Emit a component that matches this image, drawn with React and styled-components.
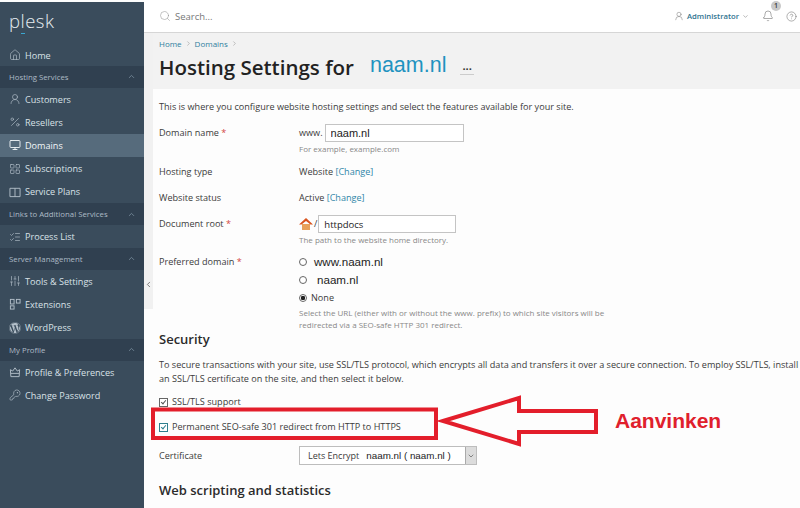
import styled, { createGlobalStyle } from "styled-components";
import {
  Bell,
  ChevronDown,
  ChevronLeft,
  ChevronRight,
  ChevronUp,
  CircleHelp,
  House,
  KeyRound,
  LayoutGrid,
  ListChecks,
  Monitor,
  Percent,
  Search,
  SlidersVertical,
  UserRound,
} from "lucide-react";
import { FaWordpress } from "react-icons/fa";

const GlobalStyle = createGlobalStyle`
  html, body {
    margin: 0;
    padding: 0;
    background: #fdfdfd;
  }
  body {
    font-family: "Open Sans", "Liberation Sans", sans-serif;
    color: #3b3b3b;
  }
`;

const Page = styled.div`
  position: relative;
  width: 800px;
  height: 508px;
  overflow: hidden;
  display: flex;
  background: #fdfdfd;
`;

const Sidebar = styled.nav`
  width: 144px;
  flex-shrink: 0;
  margin-top: 2px;
  background: #3a4c5c;
  color: #dbe3e8;
`;

const Logo = styled.div`
  height: 42px;
  padding-left: 9px;
  font-size: 18.5px;
  font-weight: 300;
  line-height: 37px;
  letter-spacing: 0.5px;
  color: #e6edf1;

  span {
    border-bottom: 1px solid #3aa6d0;
  }
`;

const NavItem = styled.div`
  height: ${(p) => p.$h || 23.2}px;
  display: flex;
  align-items: center;
  gap: 4px;
  padding-left: 9px;
  font-size: 9.1px;
  background: ${(p) => (p.$active ? "#566b7c" : "transparent")};
  color: ${(p) => (p.$active ? "#f3f6f8" : "#d9e1e7")};
  white-space: nowrap;

  svg {
    flex-shrink: 0;
    color: ${(p) => (p.$active ? "#f3f6f8" : "#b4c0ca")};
  }
`;

const NavGroup = styled.div`
  height: 21.5px;
  display: flex;
  align-items: center;
  justify-content: space-between;
  padding: 0 8px 0 9px;
  font-size: 7.8px;
  background: #304050;
  color: #aebbc6;
  white-space: nowrap;

  svg {
    color: #7f93a3;
  }
`;

const Toggle = styled.div`
  position: absolute;
  left: 144px;
  top: 33px;
  width: 9px;
  height: 276px;
  display: flex;
  align-items: flex-end;
  justify-content: center;
  padding-bottom: 20px;
  box-sizing: border-box;
  background: #f1f1f1;
  color: #555;
`;

const Column = styled.div`
  flex: 1;
  min-width: 0;
  display: flex;
  flex-direction: column;
`;

const Header = styled.header`
  height: 33px;
  box-sizing: border-box;
  display: flex;
  align-items: center;
  padding: 0 3px 0 15px;
  background: #fff;
  border-bottom: 1px solid #d6d6d6;
`;

const SearchText = styled.span`
  margin-left: 4px;
  font-size: 9.5px;
  color: #777;
  flex: 1;
`;

const UserName = styled.span`
  margin: 0 3px;
  font-size: 7.7px;
  font-weight: 600;
  color: #2f7390;
`;

const BellWrap = styled.span`
  position: relative;
  display: flex;
  margin: 0 12px 0 13px;
`;

const Badge = styled.span`
  position: absolute;
  top: -9px;
  left: 9px;
  width: 10px;
  height: 10px;
  border-radius: 50%;
  background: #c9c9c9;
  color: #333;
  font-size: 7px;
  font-weight: 600;
  line-height: 10px;
  text-align: center;
`;

const TitleBar = styled.div`
  height: 56px;
  box-sizing: border-box;
  padding: 4px 0 0 15px;
  background: #f2f2f2;
`;

const Crumbs = styled.div`
  display: flex;
  align-items: center;
  gap: 3px;
  height: 12px;
  font-size: 8px;
  color: #2f7f9e;

  svg {
    color: #999;
  }
`;

const TitleRow = styled.div`
  display: flex;
  align-items: center;
  height: 34px;
  margin-top: 1px;
`;

const Title = styled.h1`
  margin: 0;
  font-size: 20.5px;
  font-weight: 600;
  color: #222;
`;

const TitleDomain = styled.span`
  margin-left: 16px;
  margin-top: -4px;
  font-family: "Liberation Sans", Arial, sans-serif;
  font-size: 21.5px;
  color: #1f93c0;
`;

const More = styled.span`
  margin-left: 14px;
  padding: 0 2px 2px;
  border-bottom: 1px solid #ccc;
  font-size: 11px;
  font-weight: 700;
  line-height: 12px;
  color: #333;
`;

const Content = styled.main`
  padding: 10px 0 0 15px;
  font-size: 9.1px;
  line-height: 14px;
`;

const Text = styled.p`
  margin: ${(p) => p.$top || 0}px 0 0;
  line-height: ${(p) => p.$line || 16}px;
`;

const Row = styled.div`
  display: grid;
  grid-template-columns: 140px 1fr;
  align-items: center;
  min-height: ${(p) => p.$h || 18}px;
  margin-top: ${(p) => p.$top || 0}px;
`;

const Star = styled.span`
  color: #d3473d;
`;

const Inline = styled.div`
  display: flex;
  align-items: center;
  gap: ${(p) => p.$gap || 2}px;
`;

const ChangeLink = styled.span`
  color: #2f86a8;
`;

const TextInput = styled.input`
  width: ${(p) => p.$w}px;
  height: 18px;
  box-sizing: border-box;
  padding: 0 5px;
  border: 1px solid #c4c4c4;
  background: #fff;
  color: #222;
  font-family: ${(p) =>
    p.$arial ? '"Liberation Sans", Arial, sans-serif' : '"Open Sans", sans-serif'};
  font-size: ${(p) => (p.$arial ? 11 : 9.5)}px;
`;

const Hint = styled.div`
  margin-left: 140px;
  font-size: 8px;
  line-height: ${(p) => p.$line || 14}px;
  color: #888;
  max-width: 320px;
`;

const RadioRow = styled.label`
  display: flex;
  align-items: center;
  height: 18px;
  gap: ${(p) => p.$gap || 7}px;
`;

const Radio = styled.input.attrs({ type: "radio" })`
  appearance: none;
  width: 8px;
  height: 8px;
  margin: 0;
  box-sizing: border-box;
  border: 1px solid #666;
  border-radius: 50%;
  background: ${(p) => (p.checked ? "radial-gradient(circle, #222 0 2px, #fff 2.4px)" : "#fff")};
`;

const ArialText = styled.span`
  font-family: "Liberation Sans", Arial, sans-serif;
  font-size: ${(p) => p.$size || 11.6}px;
  color: #222;
`;

const SectionTitle = styled.h2`
  margin: ${(p) => p.$top || 0}px 0 0;
  font-size: 13px;
  font-weight: 600;
  line-height: 18px;
  color: #2b2b2b;
`;

const Check = styled.input.attrs({ type: "checkbox", readOnly: true })`
  appearance: none;
  width: 9px;
  height: 9px;
  margin: 0;
  position: relative;
  box-sizing: border-box;
  border: 1px solid ${(p) => p.$color || "#666"};
  background: #fff;

  &::after {
    content: "";
    position: absolute;
    left: 2px;
    top: 0;
    width: 2px;
    height: 4px;
    border: solid ${(p) => p.$color || "#555"};
    border-width: 0 1px 1px 0;
    transform: rotate(40deg);
  }
`;

const CheckRow = styled.label`
  display: flex;
  align-items: center;
  gap: 4px;
  height: 18px;
  margin-top: ${(p) => p.$top || 0}px;
`;

const SelectBox = styled.div`
  width: 178px;
  height: 19px;
  box-sizing: border-box;
  display: flex;
  align-items: center;
  padding-left: 8px;
  border: 1px solid #bdbdbd;
  background: #fff;
  font-size: 9px;
`;

const SelectValue = styled.span`
  flex: 1;
  white-space: pre;
`;

const SelectArrow = styled.span`
  width: 10px;
  height: 17px;
  display: flex;
  align-items: center;
  justify-content: center;
  background: #dcdcdc;
  border-left: 1px solid #aaa;
  color: #555;
`;

const Annotation = styled.svg`
  position: absolute;
  left: 0;
  top: 0;
  pointer-events: none;
`;

const Note = styled.span`
  position: absolute;
  left: 615px;
  top: 409px;
  font-family: "Liberation Sans", Arial, sans-serif;
  font-size: 21px;
  font-weight: 700;
  line-height: 24px;
  color: #e0202c;
`;

const ico = { size: 12, strokeWidth: 1.3 };

const BookIcon = () => (
  <svg width="12" height="12" viewBox="0 0 13 13" fill="none" stroke="currentColor">
    <path d="M1 2.5 H6.5 V11.5 H1 Z" />
    <path d="M6.5 2.5 H12 V11.5 H6.5" />
  </svg>
);

const ExtensionsIcon = () => (
  <svg width="12" height="12" viewBox="0 0 13 13" fill="none" stroke="currentColor">
    <rect x="1.5" y="1.5" width="4" height="5" />
    <rect x="1.5" y="8.5" width="4" height="3.5" />
    <rect x="8" y="1.5" width="4" height="4" />
  </svg>
);

const ProfileIcon = () => (
  <svg width="12" height="12" viewBox="0 0 13 13" fill="none" stroke="currentColor">
    <path d="M1.5 4 L4 5.5 L6.5 2 L9 5.5 L11.5 4 L11 11.5 H2 Z" />
    <path d="M2 8 H11" />
  </svg>
);

const HomeFolder = () => (
  <svg width="14" height="12" viewBox="0 0 14 12">
    <path d="M3 6 H11 V12 H3 Z" fill="#e8a15a" />
    <path d="M0 6.5 L7 0 L14 6.5 L11.5 6.5 L7 3 L2.5 6.5 Z" fill="#d9541e" />
  </svg>
);

const services = [
  {
    group: "Hosting Services",
    items: [
      { label: "Customers", icon: <UserRound {...ico} /> },
      { label: "Resellers", icon: <Percent {...ico} /> },
      { label: "Domains", icon: <Monitor {...ico} strokeWidth={1.8} />, active: true },
      { label: "Subscriptions", icon: <LayoutGrid {...ico} /> },
      { label: "Service Plans", icon: <BookIcon /> },
    ],
  },
  {
    group: "Links to Additional Services",
    items: [{ label: "Process List", icon: <ListChecks {...ico} /> }],
  },
  {
    group: "Server Management",
    items: [
      { label: "Tools & Settings", icon: <SlidersVertical {...ico} /> },
      { label: "Extensions", icon: <ExtensionsIcon /> },
      { label: "WordPress", icon: <FaWordpress size={12} /> },
    ],
  },
  {
    group: "My Profile",
    items: [
      { label: "Profile & Preferences", icon: <ProfileIcon /> },
      { label: "Change Password", icon: <KeyRound {...ico} /> },
    ],
  },
];

export default function App() {
  return (
    <Page>
      <GlobalStyle />
      <Sidebar>
        <Logo>
          p<span>l</span>esk
        </Logo>
        <NavItem $h={22}>
          <House {...ico} />
          Home
        </NavItem>
        {services.map((s) => (
          <div key={s.group}>
            <NavGroup>
              {s.group}
              <ChevronUp size={9} />
            </NavGroup>
            {s.items.map((it) => (
              <NavItem key={it.label} $active={it.active}>
                {it.icon}
                {it.label}
              </NavItem>
            ))}
          </div>
        ))}
      </Sidebar>
      <Toggle>
        <ChevronLeft size={9} strokeWidth={2} />
      </Toggle>
      <Column>
        <Header>
          <Search size={12} strokeWidth={1} color="#888" />
          <SearchText>Search...</SearchText>
          <UserRound size={10} strokeWidth={1.2} color="#777" />
          <UserName>Administrator</UserName>
          <ChevronDown size={7} color="#888" />
          <BellWrap>
            <Bell size={12} strokeWidth={1.1} color="#666" />
            <Badge>1</Badge>
          </BellWrap>
          <CircleHelp size={11} strokeWidth={1.1} color="#666" />
        </Header>
        <TitleBar>
          <Crumbs>
            Home <ChevronRight size={7} /> Domains <ChevronRight size={7} />
          </Crumbs>
          <TitleRow>
            <Title>Hosting Settings for</Title>
            <TitleDomain>naam.nl</TitleDomain>
            <More>...</More>
          </TitleRow>
        </TitleBar>
        <Content>
          <Text>This is where you configure website hosting settings and select the features available for your site.</Text>
          <Row $top={9}>
            <span>
              Domain name <Star>*</Star>
            </span>
            <Inline>
              www. <TextInput $w={139} $arial readOnly value="naam.nl" />
            </Inline>
          </Row>
          <Hint>For example, example.com</Hint>
          <Row $top={7}>
            <span>Hosting type</span>
            <span>
              Website <ChangeLink>[Change]</ChangeLink>
            </span>
          </Row>
          <Row $top={8}>
            <span>Website status</span>
            <span>
              Active <ChangeLink>[Change]</ChangeLink>
            </span>
          </Row>
          <Row $top={8}>
            <span>
              Document root <Star>*</Star>
            </span>
            <Inline $gap={1}>
              <HomeFolder /> / <TextInput $w={138} readOnly value="httpdocs" />
            </Inline>
          </Row>
          <Hint>The path to the website home directory.</Hint>
          <Row $top={6}>
            <span>
              Preferred domain <Star>*</Star>
            </span>
            <RadioRow $gap={7}>
              <Radio readOnly checked={false} />
              <ArialText>www.naam.nl</ArialText>
            </RadioRow>
          </Row>
          <Row>
            <span />
            <RadioRow $gap={10}>
              <Radio readOnly checked={false} />
              <ArialText>naam.nl</ArialText>
            </RadioRow>
          </Row>
          <Row>
            <span />
            <RadioRow $gap={4}>
              <Radio readOnly checked />
              None
            </RadioRow>
          </Row>
          <Hint $line={11.5}>
            Select the URL (either with or without the www. prefix) to which site visitors will be redirected via a
            SEO-safe HTTP 301 redirect.
          </Hint>
          <SectionTitle>Security</SectionTitle>
          <Text $top={10} $line={14}>
            To secure transactions with your site, use SSL/TLS protocol, which encrypts all data and transfers it over a
            secure connection. To employ SSL/TLS, install an SSL/TLS certificate on the site, and then select it below.
          </Text>
          <CheckRow $top={7}>
            <Check checked />
            SSL/TLS support
          </CheckRow>
          <CheckRow $top={7}>
            <Check checked $color="#2f7f8e" />
            Permanent SEO-safe 301 redirect from HTTP to HTTPS
          </CheckRow>
          <Row $h={19} $top={10}>
            <span>Certificate</span>
            <SelectBox>
              <SelectValue>
                Lets Encrypt{"   "}
                <ArialText $size={9.8}>naam.nl ( naam.nl )</ArialText>
              </SelectValue>
              <SelectArrow>
                <ChevronDown size={8} />
              </SelectArrow>
            </SelectBox>
          </Row>
          <SectionTitle $top={16}>Web scripting and statistics</SectionTitle>
        </Content>
      </Column>
      <Annotation width="800" height="508" viewBox="0 0 800 508" fill="none" stroke="#e31e2b" strokeWidth="4">
        <rect x="153" y="409.5" width="283" height="28.5" />
        <path d="M443 421 L519 398 V411 H596 V432 H519 V444 Z" />
      </Annotation>
      <Note>Aanvinken</Note>
    </Page>
  );
}
